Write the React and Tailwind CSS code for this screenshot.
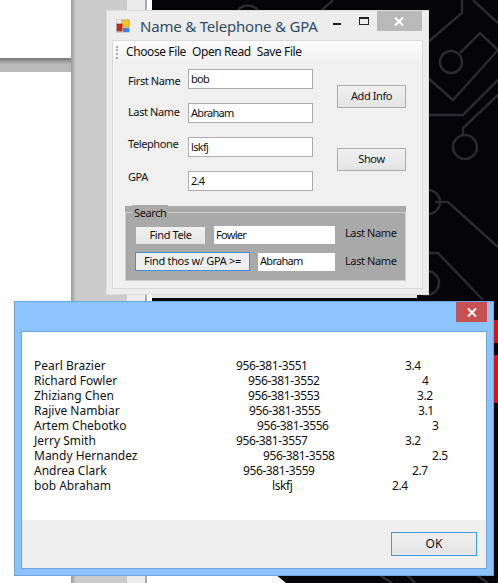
const sysFont = "font-['Noto_Sans',sans-serif] text-[#111] whitespace-nowrap";

const people = [
  { name: "Pearl Brazier", phone: "956-381-3551", gpa: "3.4", nameW: "w-[202px]", phoneW: "w-[169px]" },
  { name: "Richard Fowler", phone: "956-381-3552", gpa: "4", nameW: "w-[214px]", phoneW: "w-[174px]" },
  { name: "Zhiziang Chen", phone: "956-381-3553", gpa: "3.2", nameW: "w-[214px]", phoneW: "w-[169px]" },
  { name: "Rajive Nambiar", phone: "956-381-3555", gpa: "3.1", nameW: "w-[215px]", phoneW: "w-[169px]" },
  { name: "Artem Chebotko", phone: "956-381-3556", gpa: "3", nameW: "w-[223px]", phoneW: "w-[175px]" },
  { name: "Jerry Smith", phone: "956-381-3557", gpa: "3.2", nameW: "w-[202px]", phoneW: "w-[169px]" },
  { name: "Mandy Hernandez", phone: "956-381-3558", gpa: "2.5", nameW: "w-[229px]", phoneW: "w-[169px]" },
  { name: "Andrea Clark", phone: "956-381-3559", gpa: "2.7", nameW: "w-[209px]", phoneW: "w-[169px]" },
  { name: "bob Abraham", phone: "lskfj", gpa: "2.4", nameW: "w-[238px]", phoneW: "w-[120px]" },
];

// desktop wallpaper behind the two windows
function Wallpaper() {
  return (
    <svg className="absolute left-0 top-0" width="498" height="583" viewBox="0 0 498 583">
      <rect x="152" y="0" width="346" height="583" fill="#050508" />
      <g fill="none" stroke="#2a2a2f" strokeWidth="2.5">
        <path d="M462 0V13L428 42" />
        <path d="M473 0L498 23" />
        <circle cx="451" cy="62" r="11" />
        <path d="M460 53L480 33L498 50L453 100L428 78" />
        <path d="M428 115H463L498 80" />
        <circle cx="465" cy="147" r="12" />
        <path d="M463 135V128L498 95" />
        <circle cx="428" cy="202" r="12" />
        <path d="M435 202H448L498 247" />
        <path d="M428 253H438L483 300" />
        <circle cx="427" cy="283" r="12" />
        <path d="M333 0L322 10" />
        <path d="M238 10C243 4 252 4 258 10" />
        <path d="M372 570L392 583" />
        <path d="M402 570L415 583" />
        <path d="M470 570L488 583" />
      </g>
      <path d="M494 320H498V343H494Z M494 355H498V403H494Z" fill="#f00a0a" />
      <polygon points="152,570 270,570 286,583 152,583" fill="#ffffff" />
    </svg>
  );
}

function LeftPanels() {
  return (
    <div className="absolute left-0 top-0 h-[583px] w-[152px] flex bg-[#cbcbcb]">
      <div className="w-[71px] flex flex-col bg-[#b9b9b9]">
        <div className="h-[58px] bg-white" />
        <div className="h-[6px] bg-gradient-to-b from-[#777] to-[#b9b9b9]" />
        <div className="h-[8px]" />
        <div className="flex-1 bg-white" />
      </div>
      <div className="w-[5px] bg-gradient-to-r from-[#999] to-[#cbcbcb]" />
      <div className="w-[51px]" />
      <div className="w-[18px] bg-[#ececec]" />
      <div className="w-[2px] bg-[#aaa]" />
      <div className="w-[5px] bg-white" />
    </div>
  );
}

function AppIcon() {
  return (
    <svg width="14" height="14" viewBox="0 0 14 14">
      <rect x="0" y="0" width="14" height="14" fill="#d2d2d2" />
      <rect x="1" y="1" width="4" height="4" fill="#ececec" />
      <rect x="6" y="1" width="7" height="7" fill="#f4c430" stroke="#c99a10" strokeWidth="0.5" />
      <rect x="1" y="5" width="5" height="7" fill="#d22a1e" stroke="#8a1610" strokeWidth="0.6" />
      <rect x="7" y="9" width="6" height="4" fill="#3f83e0" />
    </svg>
  );
}

function CloseGlyph() {
  return (
    <svg width="10" height="9" viewBox="0 0 10 9">
      <path d="M1 0.5L9 8.5M9 0.5L1 8.5" stroke="#fff" strokeWidth="2" fill="none" />
    </svg>
  );
}

function FormRow({ label, labelClass, value }) {
  return (
    <div className="flex h-[20px]">
      <div className={`w-[60px] shrink-0 leading-[16px] ${labelClass}`}>{label}</div>
      <div className="flex items-center border border-[#acacac] bg-white pl-[2px] h-[20px] w-[125px] tracking-[-0.7px]">{value}</div>
    </div>
  );
}

function WinButton({ children, className }) {
  return (
    <button className={`flex items-center justify-center bg-gradient-to-b from-[#f0f0f0] to-[#e4e4e4] ${className}`}>
      {children}
    </button>
  );
}

function FormWindow() {
  return (
    <div className={`absolute left-[106px] top-[10px] w-[323px] h-[285px] bg-[#ededed] border border-[#dcdcdc] text-[11px] tracking-[-0.4px] ${sysFont}`}>
      <div className="flex h-[29px] items-center">
        <div className="ml-[9px] mt-[1px]"><AppIcon /></div>
        <div className="ml-[10px] text-[15px] tracking-[-0.2px] text-[#2f4b66] leading-none mt-[1px]">Name &amp; Telephone &amp; GPA</div>
        <div className="ml-[15px] w-[8px] h-[2px] mt-[-4px] bg-[#222]" />
        <div className="ml-[18px] w-[10px] h-[8px] mt-[-9px] border border-t-2 border-[#222]" />
        <div className="ml-[8px] w-[45px] h-[20px] mt-[-9px] bg-[#b9b9b9] flex items-center justify-center"><CloseGlyph /></div>
      </div>
      <div className="mx-[5px] h-[249px] bg-[#f0f0f0] border border-[#dadada]">
        <div className="flex h-[22px] items-center bg-gradient-to-b from-[#fdfdfd] to-[#f0f0f0] text-[12px]">
          <div className="ml-[3px] mt-[1px] h-[13px] w-[2px] border-l-2 border-dotted border-[#aaa]" />
          <span className="ml-[8px]">Choose File</span>
          <span className="ml-[6px]">Open Read</span>
          <span className="ml-[6px]">Save File</span>
        </div>
        <div className="flex pt-[6px] pl-[15px]">
          <div className="flex flex-col gap-[14px]">
            <FormRow label="First Name" labelClass="pt-[4px]" value="bob" />
            <FormRow label="Last Name" labelClass="pt-[1px]" value="Abraham" />
            <FormRow label="Telephone" labelClass="mt-[-1px]" value="lskfj" />
            <FormRow label="GPA" labelClass="mt-[-2px]" value="2.4" />
          </div>
          <div className="ml-[24px] pt-[16px] flex flex-col gap-[40px]">
            <WinButton className="w-[69px] h-[23px] border border-[#acacac]">Add Info</WinButton>
            <WinButton className="w-[69px] h-[23px] border border-[#acacac]">Show</WinButton>
          </div>
        </div>
        <div className="relative mt-[15px] ml-[12px] w-[281px] h-[75px] bg-[#a9a9a9] pt-[6px]">
          <div className="absolute left-[7px] top-[-1px] px-[2px] leading-[16px] bg-[#a9a9a9]">Search</div>
          <div className="h-[69px] border border-[#cfcfcf]">
            <div className="flex items-center pt-[13px] pl-[10px]">
              <WinButton className="w-[69px] h-[17px]">Find Tele</WinButton>
              <div className="ml-[9px] flex items-center h-[18px] w-[121px] bg-white pl-[2px] tracking-[-0.7px]">Fowler</div>
              <span className="ml-[10px] mt-[-3px]">Last Name</span>
            </div>
            <div className="flex items-center pt-[8px] pl-[9px]">
              <button className="flex items-center justify-center w-[115px] h-[19px] bg-[#eeeeee] border border-[#3f8fd8] tracking-[-0.3px]">Find thos w/ GPA &gt;=</button>
              <div className="ml-[8px] flex items-center h-[18px] w-[77px] bg-white pl-[2px] tracking-[-0.7px]">Abraham</div>
              <span className="ml-[10px]">Last Name</span>
            </div>
          </div>
        </div>
      </div>
    </div>
  );
}

function MessageDialog() {
  return (
    <div className={`absolute left-[14px] top-[301px] w-[480px] h-[275px] bg-[#8ac4fb] border border-[#6fa5dc] text-[12px] ${sysFont}`}>
      <div className="flex h-[29px] justify-end pr-[6px]">
        <div className="w-[31px] h-[20px] bg-[#c75050] flex items-center justify-center"><CloseGlyph /></div>
      </div>
      <div className="mx-[6px] h-[238px] border border-[#6fa5dc]">
        <div className="h-[188px] bg-white pl-[12px] pt-[26px]">
          {people.map((p) => (
            <div key={p.name} className="flex h-[15px] items-center leading-[15px]">
              <span className={p.nameW}>{p.name}</span>
              <span className={`tracking-[-0.4px] ${p.phoneW}`}>{p.phone}</span>
              <span className="tracking-[-0.4px]">{p.gpa}</span>
            </div>
          ))}
        </div>
        <div className="h-[48px] bg-[#efefef] flex items-center justify-end pr-[9px]">
          <button className="w-[86px] h-[24px] flex items-center justify-center border border-[#3f9be8] bg-gradient-to-b from-[#f0f0f0] to-[#e4e4e4]">OK</button>
        </div>
      </div>
    </div>
  );
}

export default function App() {
  return (
    <div className="relative w-[498px] h-[583px] overflow-hidden bg-white">
      <Wallpaper />
      <LeftPanels />
      <div className="absolute left-[152px] top-[295px] w-[265px] h-[3px] bg-[#e8e8e8]" />
      <FormWindow />
      <MessageDialog />
    </div>
  );
}
